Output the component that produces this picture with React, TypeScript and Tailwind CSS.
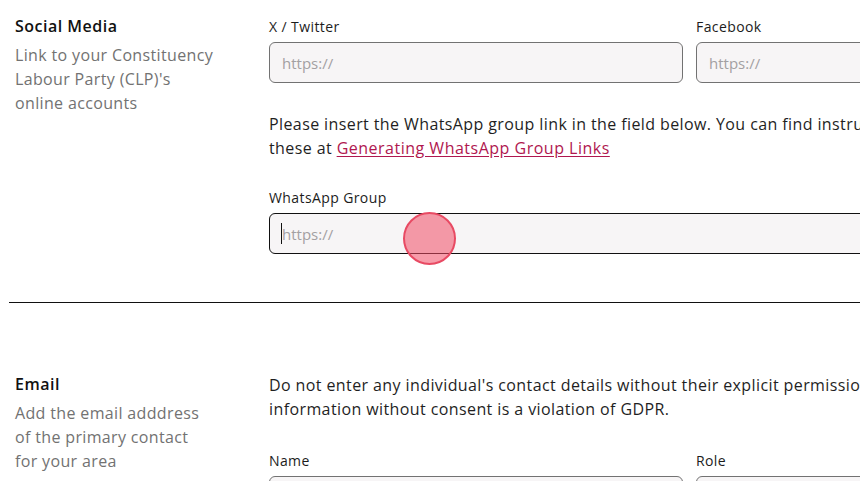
import React from 'react';

const Field = ({ label, focused = false }: { label: string; focused?: boolean }) => (
  <div className="flex flex-col">
    <label className="text-[14px] leading-6 tracking-[0.4px] text-[#1c1c1c] mb-[3px]">{label}</label>
    <div className="relative">
      <input
        type="text"
        placeholder="https://"
        className={`w-full h-[41px] rounded-md bg-[#f7f5f6] px-3 text-[15px] placeholder:text-[#a3a0a2] outline-none border ${
          focused ? 'border-[#111111] border-[1.5px]' : 'border-[#727272]'
        }`}
      />
      {focused && <span className="absolute left-[12px] top-[10px] w-px h-[21px] bg-[#111]" />}
    </div>
  </div>
);

const App = () => {
  return (
    <div
      className="w-[860px] h-[481px] overflow-hidden bg-white relative"
      style={{ fontFamily: '"Open Sans", "Noto Sans", sans-serif' }}
    >
      <div className="w-[1200px]">
        {/* Social media */}
        <section className="flex pt-[14px] pb-[48px]">
          <div className="w-[269px] pl-[15px] shrink-0">
            <h3 className="text-[16px] leading-6 font-semibold tracking-[0.5px] text-[#111]">Social Media</h3>
            <p className="mt-[5px] text-[16px] leading-6 tracking-[0.35px] text-[#727272]">
              Link to your Constituency
              <br />
              Labour Party (CLP)'s
              <br />
              online accounts
            </p>
          </div>
          <div className="w-[841px] pt-px">
            <div className="grid grid-cols-2 gap-[13px]">
              <Field label="X / Twitter" />
              <Field label="Facebook" />
            </div>
            <p className="mt-[29px] text-[16px] leading-6 tracking-[0.4px] text-[#1f1f1f]">
              Please insert the WhatsApp group link in the field below. You can find instructions on how to
              <br />
              these at{' '}
              <a href="#" className="text-[#b0174f] underline underline-offset-2 tracking-[0.5px]">
                Generating WhatsApp Group Links
              </a>
            </p>
            <div className="mt-[26px]">
              <Field label="WhatsApp Group" focused />
            </div>
          </div>
        </section>

        <hr className="ml-[9px] border-0 border-t border-[#111]" />

        {/* Email */}
        <section className="flex pt-[69px]">
          <div className="w-[269px] pl-[15px] shrink-0">
            <h3 className="text-[16px] leading-6 font-semibold tracking-[0.5px] text-[#111]">Email</h3>
            <p className="mt-[5px] text-[16px] leading-6 tracking-[0.35px] text-[#727272]">
              Add the email adddress
              <br />
              of the primary contact
              <br />
              for your area
            </p>
          </div>
          <div className="w-[841px] pt-px">
            <p className="text-[16px] leading-6 tracking-[0.4px] text-[#1f1f1f]">
              Do not enter any individual's contact details without their explicit permission. Sharing
              <br />
              information without consent is a violation of GDPR.
            </p>
            <div className="mt-[28px] grid grid-cols-2 gap-[13px]">
              <div className="flex flex-col">
                <label className="text-[14px] leading-6 tracking-[0.4px] text-[#1c1c1c] mb-[3px]">Name</label>
                <input className="h-[41px] rounded-md bg-[#f7f5f6] border border-[#727272]" />
              </div>
              <div className="flex flex-col">
                <label className="text-[14px] leading-6 tracking-[0.4px] text-[#1c1c1c] mb-[3px]">Role</label>
                <input className="h-[41px] rounded-md bg-[#f7f5f6] border border-[#727272]" />
              </div>
            </div>
          </div>
        </section>
      </div>

      {/* click indicator */}
      <div className="absolute left-[403px] top-[212px] w-[53px] h-[53px] rounded-full bg-[#f04a64]/55 border-2 border-[#e84a63]" />
    </div>
  );
};

export default App;
